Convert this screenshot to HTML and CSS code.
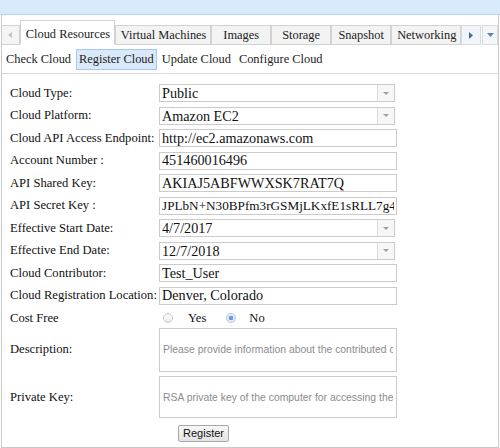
FILE: index.html
```html
<!DOCTYPE html>
<html>
<head>
<meta charset="utf-8">
<title>Register Cloud</title>
<link rel="stylesheet" href="styles.css">
</head>
<body>
<div class="window">
  <div class="topbar"></div>
  <div class="tabs">
    <div class="scroll-btn left"><svg width="4" height="6" viewBox="0 0 4 6"><path d="M4 0 L0 3 L4 6 Z" fill="#c4c4c4"/></svg></div>
    <div class="tab active">Cloud Resources</div>
    <div class="tab">Virtual Machines</div>
    <div class="tab">Images</div>
    <div class="tab">Storage</div>
    <div class="tab">Snapshot</div>
    <div class="tab">Networking</div>
    <div class="scroll-btn right"><svg width="4" height="7" viewBox="0 0 4 7"><path d="M0 0 L4 3.5 L0 7 Z" fill="#3f6f9f"/></svg></div>
    <div class="scroll-btn menu"><svg width="7" height="4" viewBox="0 0 7 4"><path d="M0 0 L7 0 L3.5 4 Z" fill="#5f84ab"/></svg></div>
  </div>
  <div class="submenu">
    <span class="sub">Check Cloud</span>
    <span class="sub selected">Register Cloud</span>
    <span class="sub">Update Cloud</span>
    <span class="sub">Configure Cloud</span>
  </div>
  <form class="form">
    <label class="lbl">Cloud Type:</label>
    <div class="combo"><span class="val">Public</span><span class="arrow"><svg width="6" height="3" viewBox="0 0 6 3"><path d="M0 0 L6 0 L3 3 Z" fill="#a0a0a0"/></svg></span></div>

    <label class="lbl">Cloud Platform:</label>
    <div class="combo"><span class="val">Amazon EC2</span><span class="arrow"><svg width="6" height="3" viewBox="0 0 6 3"><path d="M0 0 L6 0 L3 3 Z" fill="#a0a0a0"/></svg></span></div>

    <label class="lbl">Cloud API Access Endpoint:</label>
    <input class="field" type="text" value="http://ec2.amazonaws.com">

    <label class="lbl">Account Number :</label>
    <input class="field" type="text" value="451460016496">

    <label class="lbl">API Shared Key:</label>
    <input class="field" type="text" value="AKIAJ5ABFWWXSK7RAT7Q">

    <label class="lbl">API Secret Key :</label>
    <input class="field secret" type="text" value="JPLbN+N30BPfm3rGSMjLKxfE1sRLL7g4lYx9Qe2">

    <label class="lbl">Effective Start Date:</label>
    <div class="combo"><span class="val">4/7/2017</span><span class="arrow"><svg width="6" height="3" viewBox="0 0 6 3"><path d="M0 0 L6 0 L3 3 Z" fill="#a0a0a0"/></svg></span></div>

    <label class="lbl">Effective End Date:</label>
    <div class="combo"><span class="val">12/7/2018</span><span class="arrow"><svg width="6" height="3" viewBox="0 0 6 3"><path d="M0 0 L6 0 L3 3 Z" fill="#a0a0a0"/></svg></span></div>

    <label class="lbl">Cloud Contributor:</label>
    <input class="field" type="text" value="Test_User">

    <label class="lbl">Cloud Registration Location:</label>
    <input class="field" type="text" value="Denver, Colorado">

    <label class="lbl cost">Cost Free</label>
    <div class="radios">
      <input class="radio" type="radio" name="cost" id="cf-yes"><label class="rlabel yes" for="cf-yes">Yes</label>
      <input class="radio" type="radio" name="cost" id="cf-no" checked><label class="rlabel no" for="cf-no">No</label>
    </div>

    <label class="lbl">Description:</label>
    <input class="area" type="text" placeholder="Please provide information about the contributed cloud">

    <label class="lbl">Private Key:</label>
    <input class="area" type="text" placeholder="RSA private key of the computer for accessing the cloud">

    <div class="actions"><button class="btn" type="button">Register</button></div>
  </form>
</div>
</body>
</html>
```
FILE: styles.css
```css
html, body {
  margin: 0;
  padding: 0;
}
body {
  width: 500px;
  height: 448px;
  overflow: hidden;
  background: #ffffff;
  font-family: "Liberation Serif", "Times New Roman", serif;
  font-size: 12.6px;
  color: #111;
}
.window {
  box-sizing: border-box;
  width: 498px;
  height: 448px;
  margin-left: 1px;
  border: 1px solid #c9c9c9;
  border-top: none;
}
.topbar {
  height: 14px;
  margin: 0 -2px;
  background: #d8e9fb;
  border-bottom: 1px solid #b8d1ec;
}
.tabs {
  display: flex;
  align-items: flex-end;
  height: 25px;
  margin-top: 5px;
  font-size: 12.4px;
}
.scroll-btn {
  box-sizing: border-box;
  height: 20px;
  border: 1px solid #d3d3d3;
  background: #f4f4f4;
  display: flex;
  align-items: center;
  justify-content: center;
}
.scroll-btn.left {
  width: 18px;
  border-left: none;
}
.scroll-btn.right {
  width: 20px;
  margin-left: auto;
  background: #f1f5f9;
  border-color: #d4dbe3;
}
.scroll-btn.menu {
  width: 16px;
  margin-left: 1px;
  background: #f3f5f8;
  border-color: #d4dbe3;
}
.tab {
  box-sizing: border-box;
  height: 20px;
  min-width: 60px;
  padding: 0 5px;
  line-height: 18px;
  text-align: center;
  white-space: nowrap;
  border: 1px solid #d2d2d2;
  background: #f3f3f3;
  color: #222;
}
.tab.active {
  height: 25px;
  padding-top: 4px;
  background: #ffffff;
  border-bottom-color: #ffffff;
}
.submenu {
  display: flex;
  align-items: center;
  gap: 2px;
  height: 28px;
  border-bottom: 1px solid #d8d8d8;
  padding-left: 1px;
  font-size: 12.4px;
}
.sub {
  padding: 2px 2px;
  line-height: 15px;
  border: 1px solid transparent;
  white-space: nowrap;
  color: #222;
}
.sub.selected {
  background: #dae9f9;
  border-color: #a7c9ec;
}
.form {
  display: grid;
  grid-template-columns: 149px 238px;
  grid-template-rows: repeat(10, 18px) 14px 44px 42px auto;
  row-gap: 4.5px;
  padding: 10px 0 0 8px;
  margin: 0;
}
.lbl {
  align-self: center;
  white-space: nowrap;
  color: #111;
}
.lbl.cost {
  margin-top: 4px;
}
.combo {
  box-sizing: border-box;
  width: 236px;
  height: 18px;
  border: 1px solid #cbcbcb;
  display: flex;
  align-items: stretch;
  background: #fff;
}
.val {
  flex: 1;
  padding-left: 2px;
  font-size: 14.2px;
  line-height: 16px;
  white-space: nowrap;
  overflow: hidden;
}
.arrow {
  width: 16px;
  border-left: 1px solid #dcdcdc;
  background: #f7f7f7;
  display: flex;
  align-items: center;
  justify-content: center;
}
.field {
  box-sizing: border-box;
  width: 238px;
  height: 18px;
  margin: 0;
  padding: 0 2px;
  border: 1px solid #cbcbcb;
  font-family: "Liberation Serif", "Times New Roman", serif;
  font-size: 14.2px;
  color: #111;
  outline: none;
}
.field.secret {
  font-size: 13.2px;
}
.radios {
  display: flex;
  align-items: center;
  padding-left: 4px;
  margin-top: 4px;
}
.radio {
  appearance: none;
  -webkit-appearance: none;
  box-sizing: border-box;
  width: 10px;
  height: 10px;
  margin: 0;
  border: 1px solid #c9c9c9;
  border-radius: 50%;
  background: linear-gradient(#fbfbfb, #ececec);
}
.radio:checked {
  border-color: #b7c7d8;
  background: radial-gradient(circle, #6d9bd2 0 2px, #e4edf8 2.6px);
}
.rlabel.yes {
  margin-left: 15px;
  margin-right: 20px;
}
.rlabel.no {
  margin-left: 13px;
}
.area {
  box-sizing: border-box;
  width: 238px;
  margin: 0;
  padding: 0 3px;
  border: 1px solid #cbcbcb;
  font-family: "Liberation Sans", Arial, sans-serif;
  font-size: 10.4px;
  color: #333;
  outline: none;
}
.area::placeholder {
  color: #8c8c8c;
}
.actions {
  grid-column: 2;
  padding-top: 2px;
}
.btn {
  box-sizing: border-box;
  width: 51px;
  height: 17px;
  margin-left: 19px;
  padding: 0;
  border: 1px solid #a8a8a8;
  border-radius: 2px;
  background: linear-gradient(#f7f7f7, #e3e3e3);
  font-family: "Liberation Sans", Arial, sans-serif;
  font-size: 11px;
  color: #111;
}
```
